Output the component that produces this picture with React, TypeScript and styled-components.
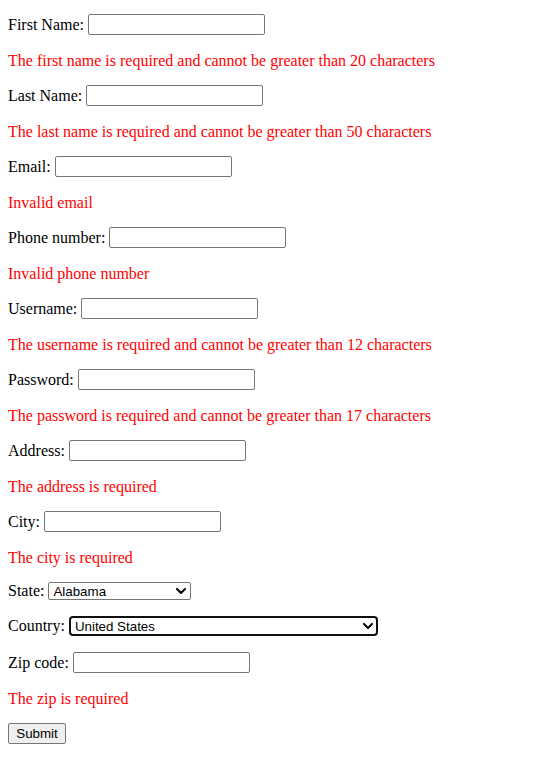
import React from "react";
import styled, { createGlobalStyle } from "styled-components";

const Global = createGlobalStyle`
  html, body { margin: 0; padding: 0; background: #fff; }
  body { font-family: "Liberation Serif", "Times New Roman", serif; font-size: 16px; color: #000; }
`;

const Form = styled.form`
  display: flex;
  flex-direction: column;
  align-items: flex-start;
  gap: 16px;
  padding: 14px 8px 16px;
`;

const Row = styled.div<{ $h?: number }>`
  display: flex;
  align-items: center;
  gap: 4px;
  height: ${(p) => p.$h ?? 21}px;
  font-family: "Liberation Serif", "Times New Roman", serif;
  font-size: 16px;
  line-height: 18px;
`;

const Label = styled.label`
  white-space: nowrap;
`;

const TextInput = styled.input`
  box-sizing: border-box;
  width: 177px;
  height: 21px;
  margin: 0;
  padding: 1px 2px;
  border: 1px solid #767676;
  border-radius: 2px;
  background: #fff;
  font-family: "Liberation Sans", Arial, sans-serif;
  font-size: 13.33px;
  outline: none;
`;

const SelectWrap = styled.div`
  position: relative;
  display: flex;
`;

const Select = styled.select<{ $w: number; $focused?: boolean }>`
  appearance: none;
  -webkit-appearance: none;
  box-sizing: border-box;
  width: ${(p) => p.$w}px;
  height: ${(p) => (p.$focused ? 20 : 18)}px;
  margin: 0;
  padding: 0 0 0 4px;
  border: ${(p) => (p.$focused ? "2px solid #101010" : "1px solid #767676")};
  border-radius: ${(p) => (p.$focused ? 4 : 2)}px;
  background: #fff;
  color: #000;
  font-family: "Liberation Sans", Arial, sans-serif;
  font-size: 13.33px;
  line-height: 15px;
  outline: none;
`;

const Chevron = styled.svg`
  position: absolute;
  right: 5px;
  top: 50%;
  transform: translateY(-50%);
  pointer-events: none;
`;

const ErrorText = styled.p`
  margin: 0;
  height: 18px;
  line-height: 20px;
  color: #ff0000;
  font-family: "Liberation Serif", "Times New Roman", serif;
  font-size: 16px;
`;

const SubmitButton = styled.button`
  box-sizing: border-box;
  height: 21px;
  width: 58px;
  margin: 0;
  padding: 0;
  border: 1px solid #767676;
  border-radius: 2px;
  background: #efefef;
  color: #000;
  font-family: "Liberation Sans", Arial, sans-serif;
  font-size: 13.33px;
`;

const ChevronIcon = () => (
  <Chevron width="10" height="6" viewBox="0 0 10 6">
    <path d="M1 1 L5 5 L9 1" fill="none" stroke="#000" strokeWidth="2" strokeLinecap="round" strokeLinejoin="round" />
  </Chevron>
);

type Field = { label: string; error: string };

const fields: Field[] = [
  { label: "First Name:", error: "The first name is required and cannot be greater than 20 characters" },
  { label: "Last Name:", error: "The last name is required and cannot be greater than 50 characters" },
  { label: "Email:", error: "Invalid email" },
  { label: "Phone number:", error: "Invalid phone number" },
  { label: "Username:", error: "The username is required and cannot be greater than 12 characters" },
  { label: "Password:", error: "The password is required and cannot be greater than 17 characters" },
  { label: "Address:", error: "The address is required" },
  { label: "City:", error: "The city is required" },
];

export default function App() {
  return (
    <>
      <Global />
      <Form onSubmit={(e) => e.preventDefault()}>
        {fields.map((f) => (
          <React.Fragment key={f.label}>
            <Row>
              <Label>{f.label}</Label>
              <TextInput type={f.label === "Password:" ? "password" : "text"} />
            </Row>
            <ErrorText>{f.error}</ErrorText>
          </React.Fragment>
        ))}
        <Row $h={18}>
          <Label>State:</Label>
          <SelectWrap>
            <Select $w={143} defaultValue="Alabama">
              <option>Alabama</option>
              <option>Alaska</option>
            </Select>
            <ChevronIcon />
          </SelectWrap>
        </Row>
        <Row $h={20}>
          <Label>Country:</Label>
          <SelectWrap>
            <Select $w={309} $focused defaultValue="United States">
              <option>United States</option>
              <option>Canada</option>
            </Select>
            <ChevronIcon />
          </SelectWrap>
        </Row>
        <Row>
          <Label>Zip code:</Label>
          <TextInput type="text" />
        </Row>
        <ErrorText>The zip is required</ErrorText>
        <SubmitButton type="submit">Submit</SubmitButton>
      </Form>
    </>
  );
}
